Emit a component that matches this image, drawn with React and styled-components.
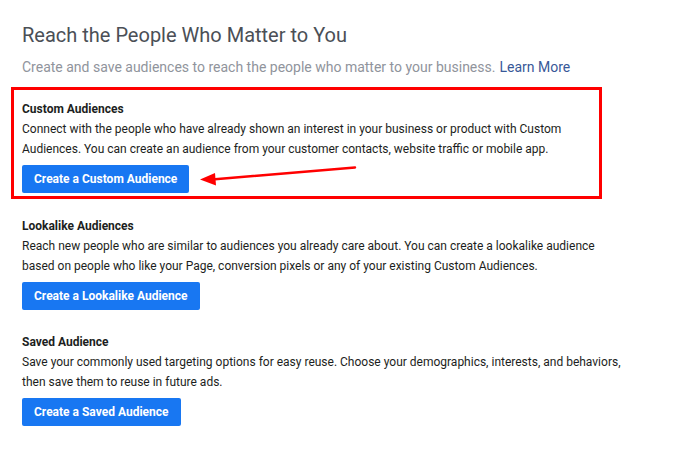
import React from 'react'
import styled, { createGlobalStyle } from 'styled-components'

const GlobalStyle = createGlobalStyle`
  body {
    margin: 0;
    background: #fff;
    font-family: Roboto, "Liberation Sans", Arial, sans-serif;
    -webkit-font-smoothing: antialiased;
  }
`

const Page = styled.div`
  position: relative;
  width: 692px;
  height: 449px;
  padding: 23px 22px 0;
  box-sizing: border-box;
`

const Title = styled.h1`
  margin: 0;
  font-size: 20px;
  line-height: 24px;
  font-weight: 400;
  color: #4b4f56;
`

const Subtitle = styled.p`
  margin: 10px 0 10px;
  font-size: 14px;
  line-height: 20px;
  color: #90949c;
  a {
    color: #385898;
    text-decoration: none;
    margin-left: 4px;
  }
`

const Section = styled.section`
  margin-top: ${({ first }) => (first ? 0 : '22px')};
  ${({ highlighted }) =>
    highlighted &&
    `
    margin: 0 -11px -5px -11px;
    width: 569px;
    padding: 9px 8px 3px;
    border: 3px solid #ff0000;
  `}
`

const Heading = styled.h3`
  margin: 0;
  font-size: 12px;
  line-height: 20px;
  font-weight: 700;
  color: #1c1e21;
`

const Body = styled.p`
  margin: 0;
  max-width: 605px;
  font-size: 12px;
  line-height: 20px;
  color: #1c1e21;
`

const Button = styled.button`
  margin-top: 6px;
  height: 28px;
  padding: 0 12px;
  border: none;
  border-radius: 2px;
  background: #1877f2;
  color: #fff;
  font-family: inherit;
  font-size: 12px;
  font-weight: 700;
  cursor: pointer;
`

const Arrow = styled.svg`
  position: absolute;
  left: 195px;
  top: 160px;
`

const sections = [
  {
    title: 'Custom Audiences',
    text: 'Connect with the people who have already shown an interest in your business or product with Custom Audiences. You can create an audience from your customer contacts, website traffic or mobile app.',
    cta: 'Create a Custom Audience',
    highlighted: true,
  },
  {
    title: 'Lookalike Audiences',
    text: 'Reach new people who are similar to audiences you already care about. You can create a lookalike audience based on people who like your Page, conversion pixels or any of your existing Custom Audiences.',
    cta: 'Create a Lookalike Audience',
  },
  {
    title: 'Saved Audience',
    text: 'Save your commonly used targeting options for easy reuse. Choose your demographics, interests, and behaviors, then save them to reuse in future ads.',
    cta: 'Create a Saved Audience',
  },
]

export default function App () {
  return (
    <Page>
      <GlobalStyle />
      <Title>Reach the People Who Matter to You</Title>
      <Subtitle>
        Create and save audiences to reach the people who matter to your business.
        <a href="#">Learn More</a>
      </Subtitle>
      {sections.map((s, i) => (
        <Section key={s.title} first={i === 0} highlighted={s.highlighted}>
          <Heading>{s.title}</Heading>
          <Body>{s.text}</Body>
          <Button>{s.cta}</Button>
        </Section>
      ))}
      <Arrow width="165" height="30" viewBox="0 0 165 30">
        <line x1="160" y1="7.5" x2="17" y2="19.5" stroke="#ff0000" strokeWidth="2.5" strokeLinecap="round" />
        <polygon points="5,19.5 20,13 21,25.5" fill="#ff0000" />
      </Arrow>
    </Page>
  )
}
